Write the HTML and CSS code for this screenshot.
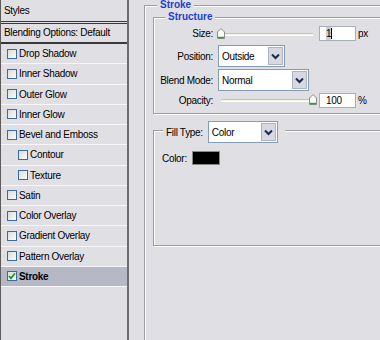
FILE: index.html
```html
<!DOCTYPE html>
<html lang="en">
<head>
    <meta charset="UTF-8">
    <title>Layer Style - Stroke</title>
    <link rel="stylesheet" href="styles.css">
</head>
<body>
    <div class="dialog">
        <!-- Styles list -->
        <ul class="styles-list">
            <li class="list-head">Styles</li>
            <li class="list-blend">Blending Options: Default</li>
            <li class="list-item"><span class="check"></span>Drop Shadow</li>
            <li class="list-item"><span class="check"></span>Inner Shadow</li>
            <li class="list-item"><span class="check"></span>Outer Glow</li>
            <li class="list-item"><span class="check"></span>Inner Glow</li>
            <li class="list-item"><span class="check"></span>Bevel and Emboss</li>
            <li class="list-item sub"><span class="check"></span>Contour</li>
            <li class="list-item sub"><span class="check"></span>Texture</li>
            <li class="list-item"><span class="check"></span>Satin</li>
            <li class="list-item"><span class="check"></span>Color Overlay</li>
            <li class="list-item"><span class="check"></span>Gradient Overlay</li>
            <li class="list-item"><span class="check"></span>Pattern Overlay</li>
            <li class="list-item active">
                <span class="check">
                    <svg width="8" height="8" viewBox="0 0 8 8"><path d="M1 4 L3 6.3 L7 1.2" fill="none" stroke="#1f9a1f" stroke-width="1.8"/></svg>
                </span>Stroke
            </li>
        </ul>

        <!-- Stroke settings -->
        <div class="panel">
            <div class="group group-stroke">
                <div class="group-title">Stroke</div>

                <div class="group group-structure">
                    <div class="group-title">Structure</div>

                    <div class="row row-size">
                        <span class="label">Size:</span>
                        <div class="slider">
                            <div class="track"></div>
                            <svg class="thumb" width="8" height="11" viewBox="0 0 8 11"><path d="M0.5 4 L4 0.5 L7.5 4 L7.5 10.5 L0.5 10.5 Z" fill="#fbfbfb" stroke="#8c8c8c"/><path d="M1 9.5 H7" stroke="#2ba52b" stroke-width="1.5"/></svg>
                        </div>
                        <div class="num"><span class="num-sel">1</span><span class="caret"></span></div>
                        <span class="unit">px</span>
                    </div>

                    <div class="row row-position">
                        <span class="label">Position:</span>
                        <div class="select select-position">
                            <span class="select-text">Outside</span>
                            <span class="select-btn"><svg width="13" height="16" viewBox="0 0 13 16"><path d="M3 6.5 L6.5 10 L10 6.5" fill="none" stroke="#1d2b4f" stroke-width="2"/></svg></span>
                        </div>
                    </div>

                    <div class="row row-blend">
                        <span class="label">Blend Mode:</span>
                        <div class="select select-blend">
                            <span class="select-text">Normal</span>
                            <span class="select-btn"><svg width="13" height="16" viewBox="0 0 13 16"><path d="M3 6.5 L6.5 10 L10 6.5" fill="none" stroke="#1d2b4f" stroke-width="2"/></svg></span>
                        </div>
                    </div>

                    <div class="row row-opacity">
                        <span class="label">Opacity:</span>
                        <div class="slider slider-opacity">
                            <div class="track"></div>
                            <svg class="thumb thumb-end" width="8" height="11" viewBox="0 0 8 11"><path d="M0.5 4 L4 0.5 L7.5 4 L7.5 10.5 L0.5 10.5 Z" fill="#fbfbfb" stroke="#8c8c8c"/><path d="M1 9.5 H7" stroke="#2ba52b" stroke-width="1.5"/></svg>
                        </div>
                        <div class="num">100</div>
                        <span class="unit">%</span>
                    </div>
                </div>

                <div class="group group-fill">
                    <div class="fill-title">
                        <span>Fill Type:</span>
                        <div class="select select-fill">
                            <span class="select-text">Color</span>
                            <span class="select-btn"><svg width="13" height="16" viewBox="0 0 13 16"><path d="M3 6.5 L6.5 10 L10 6.5" fill="none" stroke="#1d2b4f" stroke-width="2"/></svg></span>
                        </div>
                    </div>
                    <div class="color-row">
                        <span>Color:</span>
                        <span class="swatch"></span>
                    </div>
                </div>
            </div>
        </div>
    </div>
</body>
</html>
```

FILE: styles.css
```css
body {
    margin: 0;
    width: 380px;
    height: 340px;
    overflow: hidden;
    background-color: #e0dfe3;
    font-family: 'Liberation Sans', Arial, sans-serif;
    font-size: 10px;
    letter-spacing: -0.3px;
    color: #000;
}

.dialog {
    display: flex;
    height: 340px;
    overflow: hidden;
}

/* Styles list */
.styles-list {
    list-style: none;
    margin: 0;
    padding: 0;
    width: 126px;
    height: 340px;
    flex-shrink: 0;
    border-left: 1px solid #5c5c5c;
    border-right: 2px solid #6b6b6b;
}

.list-head {
    height: 21px;
    line-height: 21px;
    padding-left: 3px;
    border-bottom: 3px double #3a3a3a;
}

.list-blend {
    height: 18px;
    line-height: 18px;
    padding-left: 3px;
    border-bottom: 2px solid #3a3a3a;
}

.list-item {
    display: flex;
    align-items: center;
    gap: 2px;
    height: 19.25px;
    padding-left: 6px;
    border-bottom: 1px solid #f7f7f9;
}

.list-item.sub {
    padding-left: 17px;
}

.list-item.active {
    background-color: #b6b8c6;
    font-weight: bold;
}

.check {
    display: flex;
    align-items: center;
    justify-content: center;
    width: 8px;
    height: 8px;
    border: 1px solid #3b6a9c;
    background: linear-gradient(135deg, #dcdcd8, #fbfbfb);
}

/* Settings panel */
.panel {
    margin-left: 15px;
    padding-top: 5px;
}

.group {
    position: relative;
    border: 1px solid #9c9ca4;
    box-shadow: 1px 1px 0 #fcfcfd, inset 1px 1px 0 #fcfcfd;
}

.group-title {
    position: absolute;
    top: -7px;
    padding: 0 3px;
    line-height: 12px;
    background-color: #e0dfe3;
    color: #1d3fd0;
    font-weight: bold;
    letter-spacing: 0;
}

.group-stroke {
    width: 260px;
    height: 400px;
    padding: 11px 0 0 8px;
}

.group-stroke > .group-title {
    left: 12px;
}

.group-structure {
    width: 260px;
    height: 87px;
    padding-top: 8px;
}

.group-structure > .group-title {
    left: 11px;
}

.row {
    display: flex;
    align-items: center;
}

.label {
    width: 59px;
    margin-right: 4px;
    text-align: right;
}

.row-size {
    height: 15px;
}

.row-position {
    height: 22px;
    margin-top: 4px;
}

.row-blend {
    height: 22px;
    margin-top: 2px;
}

.row-opacity {
    height: 14px;
    margin-top: 2px;
}

/* Slider */
.slider {
    position: relative;
    width: 97px;
    height: 12px;
    margin-right: 5px;
}

.slider-opacity {
    width: 97px;
    margin-left: 3px;
    margin-right: 2px;
}

.track {
    position: absolute;
    left: 1px;
    right: 1px;
    top: 5px;
    height: 1px;
    background-color: #f6f5ea;
    border-top: 1px solid #c2c1b6;
    border-bottom: 1px solid #fff;
}

.slider-opacity .track {
    right: 4px;
}

.thumb {
    position: absolute;
    left: 0;
    top: 0;
}

.thumb-end {
    left: auto;
    right: 0;
}

/* Number input */
.num {
    width: 29px;
    height: 13px;
    line-height: 13px;
    padding-left: 6px;
    background-color: #fff;
    border: 1px solid #a7aeb6;
    display: flex;
    align-items: center;
}

.num-sel {
    background-color: #c9cfdc;
}

.caret {
    width: 1px;
    height: 11px;
    background-color: #000;
}

.unit {
    margin-left: 2px;
}

/* Dropdown */
.select {
    display: flex;
    align-items: center;
    height: 20px;
    background-color: #fff;
    border: 1px solid #7f9db9;
}

.select-position {
    width: 65px;
    margin-left: 1px;
}

.select-blend {
    width: 89px;
    margin-left: 1px;
}

.select-fill {
    width: 68px;
}

.select-text {
    flex: 1;
    padding-left: 3px;
}

.select-btn {
    display: flex;
    align-items: center;
    justify-content: center;
    width: 13px;
    height: 16px;
    margin-right: 1px;
    background-color: #d6d8e2;
    border: 1px solid #aeb2c2;
}

/* Fill type */
.group-fill {
    width: 260px;
    height: 94px;
    margin-top: 16px;
    padding-top: 20px;
}

.fill-title {
    position: absolute;
    left: 9px;
    top: -10px;
    display: flex;
    align-items: center;
    gap: 5px;
    padding: 0 7px 0 3px;
    background-color: #e0dfe3;
}

.color-row {
    display: flex;
    align-items: center;
    gap: 5px;
    padding-left: 8px;
    height: 14px;
}

.swatch {
    width: 26px;
    height: 12px;
    background-color: #000;
    border: 1px solid #8a8a8a;
}
```
